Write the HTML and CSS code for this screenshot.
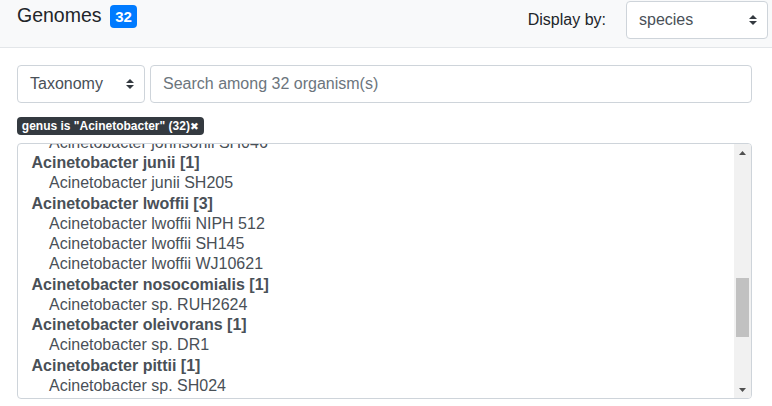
FILE: index.html
```html
<!DOCTYPE html>
<html>
<head>
<meta charset="utf-8">
<link rel="stylesheet" href="styles.css">
</head>
<body>
<div class="header">
  <div class="title">Genomes<span class="badge">32</span></div>
  <div class="display">
    <span class="display-label">Display by:</span>
    <div class="select select-species">
      <span>species</span>
      <svg class="caret" width="8" height="10" viewBox="0 0 4 5"><path d="M2 0L0 2h4zm0 5L0 3h4z" fill="#343a40"/></svg>
    </div>
  </div>
</div>
<div class="toolbar">
  <div class="select select-tax">
    <span>Taxonomy</span>
    <svg class="caret" width="8" height="10" viewBox="0 0 4 5"><path d="M2 0L0 2h4zm0 5L0 3h4z" fill="#343a40"/></svg>
  </div>
  <input class="search" type="text" placeholder="Search among 32 organism(s)">
</div>
<div class="tags">
  <span class="tag">genus is "Acinetobacter" (32)<span class="tag-x">✖</span></span>
</div>
<div class="listbox">
  <div class="list-body">
    <div class="list-inner">
      <div class="opt">Acinetobacter johnsonii SH046</div>
      <div class="grp">Acinetobacter junii [1]</div>
      <div class="opt">Acinetobacter junii SH205</div>
      <div class="grp">Acinetobacter lwoffii [3]</div>
      <div class="opt">Acinetobacter lwoffii NIPH 512</div>
      <div class="opt">Acinetobacter lwoffii SH145</div>
      <div class="opt">Acinetobacter lwoffii WJ10621</div>
      <div class="grp">Acinetobacter nosocomialis [1]</div>
      <div class="opt">Acinetobacter sp. RUH2624</div>
      <div class="grp">Acinetobacter oleivorans [1]</div>
      <div class="opt">Acinetobacter sp. DR1</div>
      <div class="grp">Acinetobacter pittii [1]</div>
      <div class="opt">Acinetobacter sp. SH024</div>
    </div>
  </div>
  <div class="scrollbar">
    <div class="sb-btn"><svg width="7" height="4" viewBox="0 0 7 4"><path d="M3.5 0L7 4H0z" fill="#505050"/></svg></div>
    <div class="sb-track"><div class="sb-thumb"></div></div>
    <div class="sb-btn"><svg width="7" height="4" viewBox="0 0 7 4"><path d="M0 0h7L3.5 4z" fill="#505050"/></svg></div>
  </div>
</div>
</body>
</html>
```
FILE: styles.css
```css
* { box-sizing: border-box; }
body {
  margin: 0;
  font-family: "Liberation Sans", Arial, sans-serif;
  color: #212529;
  background: #fff;
}
.header {
  display: flex;
  justify-content: space-between;
  align-items: flex-start;
  height: 48px;
  padding: 0 4px 0 17px;
  background: #f8f9fa;
  border-bottom: 1px solid #e3e6e9;
}
.title {
  margin-top: 4px;
  font-size: 19.5px;
  line-height: 1.2;
}
.badge {
  display: inline-block;
  margin-left: 8px;
  padding: 3.75px 5.6px;
  font-size: 15px;
  font-weight: 700;
  line-height: 1;
  color: #fff;
  background: #007bff;
  border-radius: 4px;
}
.display {
  display: flex;
  align-items: center;
  gap: 20px;
  margin-top: 1px;
}
.display-label {
  font-size: 16px;
  color: #212529;
}
.select {
  display: flex;
  align-items: center;
  justify-content: space-between;
  height: 38px;
  padding: 0 10px 0 12px;
  font-size: 16px;
  color: #495057;
  background: #fff;
  border: 1px solid #ced4da;
  border-radius: 4px;
}
.select-species { width: 142px; }
.select-tax { width: 128px; }
.caret { flex: none; }
.toolbar {
  display: flex;
  gap: 5px;
  margin: 17px 20px 0 17px;
}
.search {
  flex: 1;
  height: 38px;
  padding: 0 12px;
  font-family: "Liberation Sans", Arial, sans-serif;
  font-size: 16px;
  color: #495057;
  border: 1px solid #ced4da;
  border-radius: 4px;
  outline: none;
}
.search::placeholder { color: #6c757d; }
.tags {
  margin: 13px 20px 0 17px;
  height: 18px;
}
.tag {
  display: inline-block;
  padding: 3px 4.8px;
  font-size: 12px;
  font-weight: 700;
  line-height: 1;
  color: #fff;
  background: #343a40;
  border-radius: 4px;
}
.tag-x {
  font-family: "DejaVu Sans", sans-serif;
  font-size: 10.5px;
  line-height: 1;
}
.listbox {
  display: flex;
  height: 256px;
  margin: 9px 20px 0 17px;
  border: 1px solid #ced4da;
  border-radius: 4px;
  overflow: hidden;
  background: #fff;
}
.list-body {
  flex: 1;
  overflow: hidden;
}
.list-inner {
  margin-top: -11.2px;
  font-size: 16px;
  line-height: 20.27px;
  color: #495057;
  white-space: nowrap;
}
.grp {
  font-weight: 700;
  padding-left: 13.5px;
}
.opt {
  padding-left: 31px;
}
.scrollbar {
  flex: none;
  width: 17px;
  display: flex;
  flex-direction: column;
  background: #f1f1f1;
}
.sb-btn {
  height: 17px;
  display: flex;
  align-items: center;
  justify-content: center;
}
.sb-track {
  flex: 1;
  padding: 117px 2px 0 2px;
}
.sb-thumb {
  height: 59px;
  background: #c1c1c1;
}
```
